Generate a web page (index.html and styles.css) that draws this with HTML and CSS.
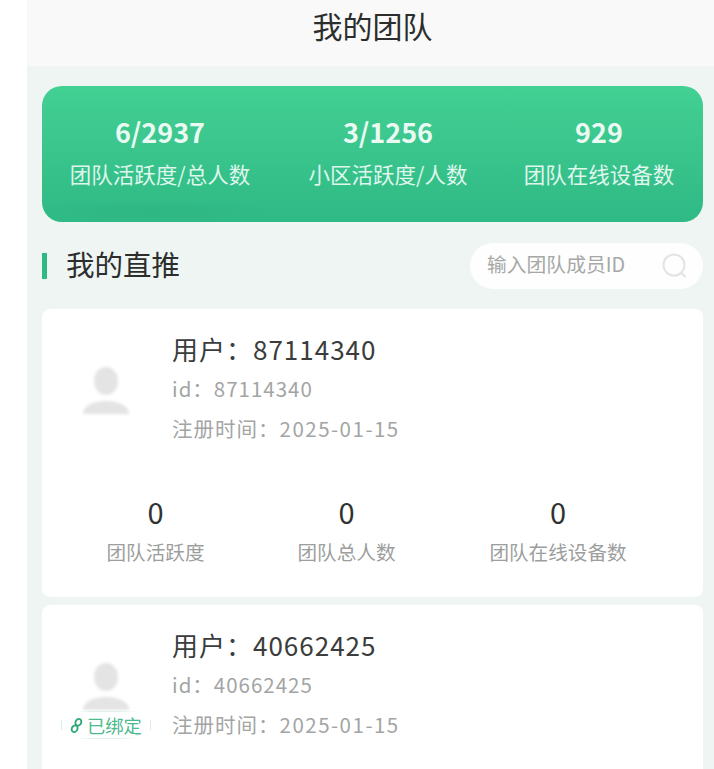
FILE: index.html
```html
<!DOCTYPE html>
<html lang="zh-CN">
<head>
<meta charset="utf-8">
<title>我的团队</title>
<link rel="stylesheet" href="styles.css">
</head>
<body>
<div class="app">
  <header class="topbar">我的团队</header>
  <main class="content">
    <section class="banner">
      <div class="stat stat-a"><div class="stat-value">6/2937</div><div class="stat-label">团队活跃度/总人数</div></div>
      <div class="stat stat-b"><div class="stat-value">3/1256</div><div class="stat-label">小区活跃度/人数</div></div>
      <div class="stat stat-c"><div class="stat-value">929</div><div class="stat-label">团队在线设备数</div></div>
    </section>
    <section class="section-head">
      <h2 class="section-title">我的直推</h2>
      <div class="search">
        <span class="search-text">输入团队成员ID</span>
        <svg class="search-icon" viewBox="0 0 26 26" width="26" height="26"><circle cx="12" cy="12" r="10.5"/><path d="M19.5 20l4 4"/></svg>
      </div>
    </section>
    <article class="card">
      <div class="card-top">
        <div class="avatar-box">
          <svg class="avatar" viewBox="0 0 48 48" width="48" height="48"><ellipse cx="24" cy="14" rx="12" ry="14"/><path d="M1 47c0-9 12-13 23-13s23 4 23 13z"/></svg>
        </div>
        <div class="info">
          <div class="user-name">用户：87114340</div>
          <div class="user-meta">id：87114340</div>
          <div class="user-meta">注册时间：<span class="date">2025-01-15</span></div>
        </div>
      </div>
      <div class="card-stats">
        <div class="cell cell-a"><div class="cell-value">0</div><div class="cell-label">团队活跃度</div></div>
        <div class="cell cell-b"><div class="cell-value">0</div><div class="cell-label">团队总人数</div></div>
        <div class="cell cell-c"><div class="cell-value">0</div><div class="cell-label">团队在线设备数</div></div>
      </div>
    </article>
    <article class="card">
      <div class="card-top">
        <div class="avatar-box">
          <svg class="avatar" viewBox="0 0 48 48" width="48" height="48"><ellipse cx="24" cy="14" rx="12" ry="14"/><path d="M1 47c0-9 12-13 23-13s23 4 23 13z"/></svg>
          <div class="bound">
            <svg class="link-icon" viewBox="0 0 14 18" width="13" height="17"><g transform="rotate(30 7 9)"><ellipse cx="7" cy="5" rx="3" ry="3.8"/><ellipse cx="7" cy="13" rx="3" ry="3.8"/></g></svg>
            <span>已绑定</span>
          </div>
        </div>
        <div class="info">
          <div class="user-name">用户：40662425</div>
          <div class="user-meta">id：40662425</div>
          <div class="user-meta">注册时间：<span class="date">2025-01-15</span></div>
        </div>
      </div>
    </article>
  </main>
</div>
</body>
</html>
```
FILE: styles.css
```css
* { box-sizing: border-box; }
html, body { margin: 0; height: 100%; background: #fff; overflow: hidden; }
body { font-family: "Noto Sans CJK SC", "Noto Sans", sans-serif; color: #2f3433; }
.app { margin-left: 27px; height: 769px; background: #eff5f2; display: flex; flex-direction: column; overflow: hidden; }
.topbar { height: 66px; flex: none; background: #f9f9f9; font-size: 30px; line-height: 50px; text-align: center; color: #2b2e2d; padding-left: 4px; }
.content { padding: 20px 11px 0 15px; display: flex; flex-direction: column; }
.banner { height: 136px; border-radius: 20px; background: radial-gradient(ellipse 110px 10px at 110px 124px, rgba(40, 160, 115, .2), transparent), linear-gradient(180deg, #43d093 0%, #2fb985 100%); display: flex; color: #eafaf3; }
.stat { text-align: center; padding-top: 28px; }
.stat-a { width: 236px; }
.stat-b { width: 220px; }
.stat-c { width: 202px; }
.stat-value { font-size: 27px; line-height: 36px; font-weight: 700; }
.stat-label { font-size: 21.5px; line-height: 30px; margin-top: 9px; color: #dff6ec; white-space: nowrap; }
.section-head { margin-top: 21px; height: 46px; display: flex; align-items: center; justify-content: space-between; }
.section-title { margin: 0; font-size: 28.5px; font-weight: 400; line-height: 26px; height: 26px; color: #2b2e2d; border-left: 5px solid #2fb985; padding-left: 19px; display: flex; align-items: center; padding-bottom: 4px; }
.search { width: 233px; height: 46px; border-radius: 23px; background: #fdfefd; display: flex; align-items: center; justify-content: space-between; padding: 0 15px 0 17px; }
.search-text { font-size: 19.8px; line-height: 26px; padding-bottom: 4px; color: #a6a8a7; white-space: nowrap; }
.search-icon { fill: none; stroke: #e2e4e3; stroke-width: 2; }
.card { margin-top: 20px; height: 288px; background: #fff; border-radius: 8px; flex: none; }
.card + .card { margin-top: 8px; }
.card-top { display: flex; padding-top: 21px; height: 176px; }
.avatar-box { width: 130px; height: 120px; position: relative; padding: 37px 0 0 40px; flex: none; }
.avatar { fill: #e4e4e4; filter: blur(1.5px); display: block; }
.bound { position: absolute; left: 19px; top: 85px; height: 28px; display: flex; align-items: center; gap: 4px; padding: 0 9px; color: #4cba8d; font-size: 18.3px; line-height: 24px; white-space: nowrap; background: linear-gradient(90deg, transparent 15%, #dff1ea 35%, #dff1ea 65%, transparent 85%) top / 100% 1px no-repeat, linear-gradient(90deg, transparent 15%, #dff1ea 35%, #dff1ea 65%, transparent 85%) bottom / 100% 1px no-repeat, radial-gradient(ellipse 50% 50% at 50% 50%, #fff 85%, rgba(255, 255, 255, .6) 100%); }
.bound::before, .bound::after { content: ""; position: absolute; top: 9px; height: 10px; width: 1px; background: #dcebe5; }
.bound::before { left: 0; }
.bound::after { right: 0; }
.link-icon { fill: none; stroke: #2fa878; stroke-width: 2; flex: none; }
.user-name { font-size: 26px; line-height: 38px; letter-spacing: 1px; color: #3a3d3c; margin-bottom: 5px; white-space: nowrap; }
.user-meta { font-size: 20.5px; line-height: 30px; letter-spacing: 1px; color: #a3a5a4; white-space: nowrap; }
.user-meta + .user-meta { margin-top: 10px; }
.date { letter-spacing: 1.5px; }
.card-stats { display: flex; padding-top: 8px; }
.cell { text-align: center; }
.cell-a { width: 227px; }
.cell-b { width: 155px; }
.cell-c { width: 268px; }
.cell-value { font-size: 29px; line-height: 36px; color: #303332; }
.cell-label { font-size: 19.6px; line-height: 28px; margin-top: 9px; color: #9c9e9d; white-space: nowrap; }
```
